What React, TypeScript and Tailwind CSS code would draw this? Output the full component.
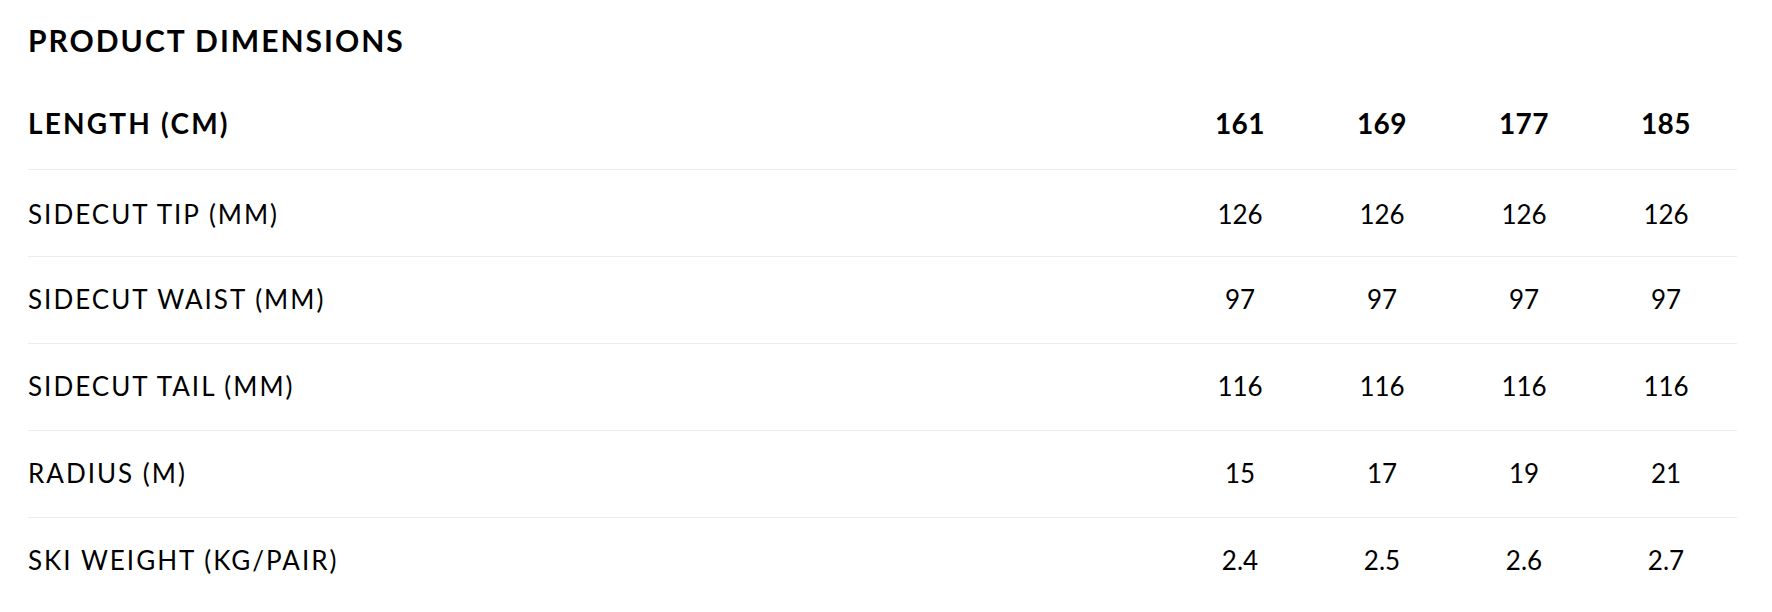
const sizes = ['161', '169', '177', '185']

const rows: { label: string; values: string[] }[] = [
  { label: 'SIDECUT TIP (MM)', values: ['126', '126', '126', '126'] },
  { label: 'SIDECUT WAIST (MM)', values: ['97', '97', '97', '97'] },
  { label: 'SIDECUT TAIL (MM)', values: ['116', '116', '116', '116'] },
  { label: 'RADIUS (M)', values: ['15', '17', '19', '21'] },
  { label: 'SKI WEIGHT (KG/PAIR)', values: ['2.4', '2.5', '2.6', '2.7'] },
]

export default function App() {
  return (
    <div className="min-h-screen bg-white pl-[28px] pr-[35px] pt-[22px] font-['Lato',sans-serif] text-black">
      <h2 className="text-[30px] font-bold leading-[36px] tracking-[2px]">PRODUCT DIMENSIONS</h2>
      <div className="mt-[22px]">
        <div className="flex h-[90px] items-center border-b border-[#ececec] pb-[4px] text-[28px] font-bold">
          <div className="flex-1 tracking-[2.2px]">LENGTH (CM)</div>
          {sizes.map((s) => (
            <div key={s} className="w-[142px] text-center tracking-[0.5px]">
              {s}
            </div>
          ))}
        </div>
        {rows.map((row, i) => (
          <div
            key={row.label}
            className={`flex h-[87px] items-center text-[26px] ${i < rows.length - 1 ? 'border-b border-[#ececec]' : ''} ${i === 0 ? 'pt-[2px]' : 'pb-[2px]'}`}
          >
            <div className="flex-1 tracking-[2px]">{row.label}</div>
            {row.values.map((v, j) => (
              <div key={j} className="w-[142px] text-center">
                {v}
              </div>
            ))}
          </div>
        ))}
      </div>
    </div>
  )
}
